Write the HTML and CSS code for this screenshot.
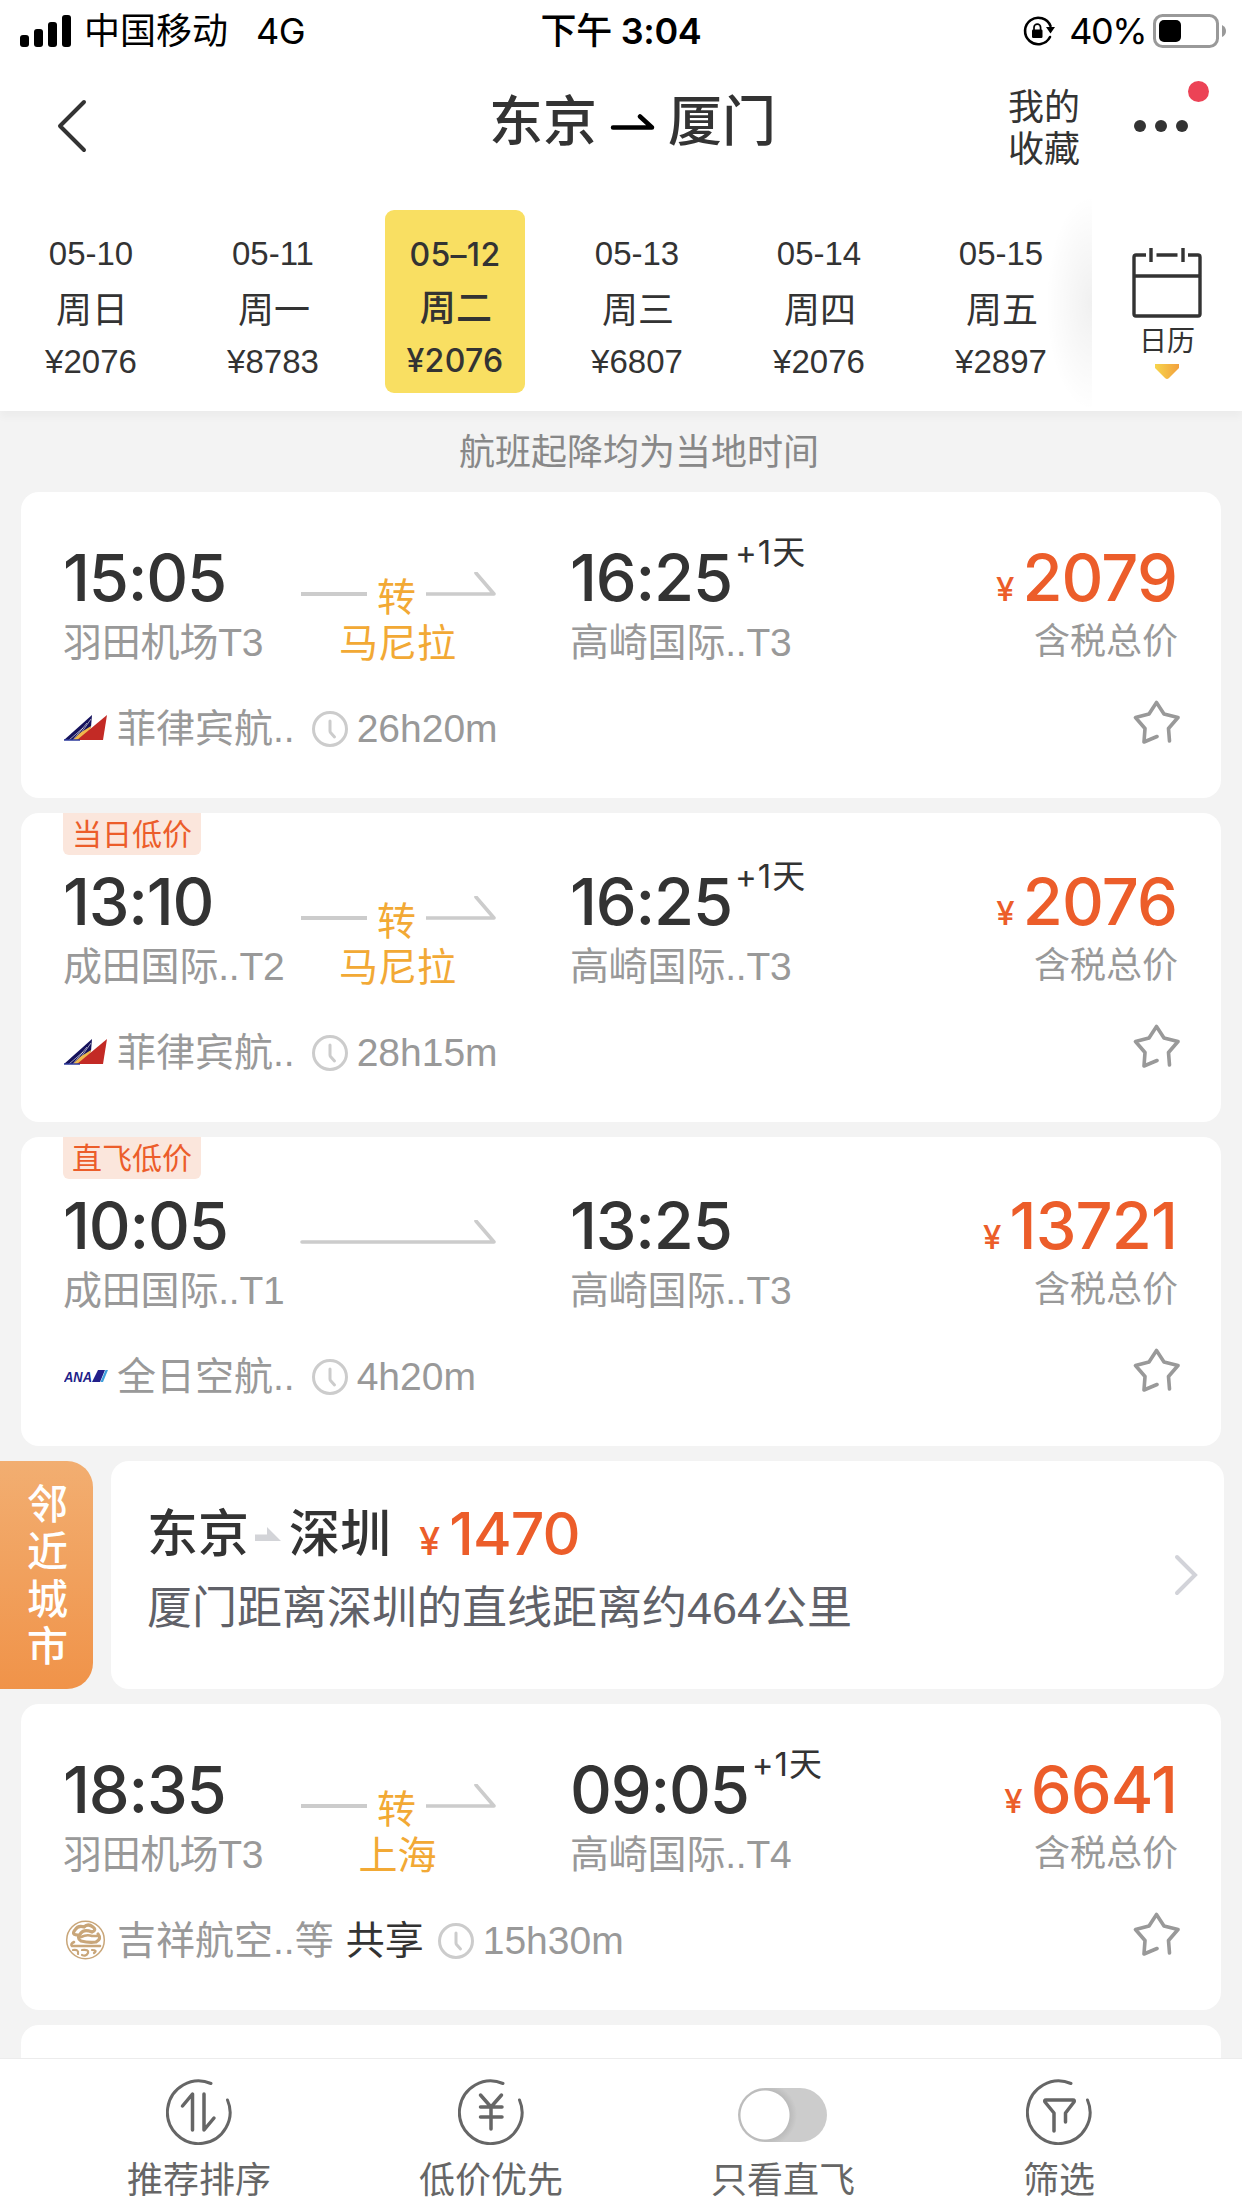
FILE: index.html
```
<!DOCTYPE html>
<html lang="zh-CN">
<head>
    <meta charset="UTF-8">
    <meta name="viewport" content="width=device-width, initial-scale=1.0">
    <title>东京 - 厦门 航班列表</title>
    <link rel="stylesheet" href="styles.css">
</head>
<body>
    <!-- shared icons -->
    <svg class="sprite">
        <symbol id="icon-line" viewBox="0 0 68 30">
            <path d="M2 22H68" fill="none" stroke="#ccc" stroke-width="4"/>
        </symbol>
        <symbol id="icon-half-arrow" viewBox="0 0 70 30">
            <path d="M0 22H68L50 1" fill="none" stroke="#ccc" stroke-width="3.6" stroke-linecap="round" stroke-linejoin="round"/>
        </symbol>
        <symbol id="icon-long-arrow" viewBox="0 0 197 30">
            <path d="M3 22H195L177 1" fill="none" stroke="#ccc" stroke-width="3.6" stroke-linecap="round" stroke-linejoin="round"/>
        </symbol>
        <symbol id="icon-clock" viewBox="0 0 36 36">
            <circle cx="18" cy="18" r="16.5" fill="none" stroke="#ccc" stroke-width="3"/>
            <path d="M18 10v10q0 1 .7 1.800L22.500 26" fill="none" stroke="#ccc" stroke-width="3" stroke-linecap="round"/>
        </symbol>
        <symbol id="icon-star" viewBox="0 0 48 46">
            <path d="M25 37.500L12 43L13 29.500L3.500 18.500L17 15L24.500 3.500L32 15L46 18.500L36.500 29.500L37.500 42" fill="none" stroke="#999" stroke-width="3.600" stroke-linecap="round" stroke-linejoin="round"/>
        </symbol>
        <symbol id="icon-ring" viewBox="0 0 66 66">
            <path d="M45 4.500A31.300 31.300 0 1 0 61.500 21" fill="none" stroke="#666" stroke-width="3" stroke-linecap="round"/>
        </symbol>
        <symbol id="logo-pal" viewBox="0 0 44 44">
            <path d="M0 34L28 9L27 21L13 34Z" fill="#15125c"/>
            <path d="M5 34L19 22M9 34L23 17M15 30L27 13" stroke="#fff" stroke-width=".6" fill="none"/>
            <path d="M9 34L16 27L27 20L26 25L15 34Z" fill="#f0b84c"/>
            <path d="M13 34L43 9L39 34Z" fill="#c32a25"/>
            <path d="M0 34H16" stroke="#2c3a9c" stroke-width="1.500"/>
        </symbol>
    </svg>

    <div class="status-bar">
        <div class="status-left">
            <svg class="signal" viewBox="0 0 52 32">
                <rect x="0" y="20" width="9" height="12" rx="3"/>
                <rect x="14" y="14" width="9" height="18" rx="3"/>
                <rect x="28" y="7" width="9" height="25" rx="3"/>
                <rect x="42" y="0" width="9" height="32" rx="3"/>
            </svg>
            <span>中国移动</span>
            <span class="network">4G</span>
        </div>
        <div class="status-time"><span>下午</span> 3:04</div>
        <div class="status-right">
            <svg class="lock" viewBox="0 0 34 32">
                <path d="M28 22A13.200 13.200 0 1 1 28.500 11" fill="none" stroke="#000" stroke-width="2.600" stroke-linecap="round"/>
                <path d="M24 12H33L28.500 18.500Z"/>
                <rect x="10" y="14.500" width="10.500" height="8.500" rx="1.200"/>
                <path d="M12 15V12.500a3.300 3.300 0 0 1 6.600 0V15" fill="none" stroke="#000" stroke-width="1.700"/>
            </svg>
            <span class="percent">40%</span>
            <svg class="battery" viewBox="0 0 74 34">
                <rect x="1.500" y="1.500" width="63" height="31" rx="8" fill="none" stroke="#999" stroke-width="3"/>
                <rect x="6" y="6" width="22" height="22" rx="5"/>
                <path d="M69 11q4 2 4 6t-4 6z" fill="#999"/>
            </svg>
        </div>
    </div>

    <div class="nav">
        <svg class="back" viewBox="0 0 32 56"><path d="M28 4L4 28L28 52" fill="none" stroke="#333" stroke-width="4" stroke-linecap="round" stroke-linejoin="round"/></svg>
        <div class="nav-title">
            <span>东京</span>
            <svg class="title-arrow" viewBox="0 0 46 20"><path d="M3 13.500H42L30 2.500" fill="none" stroke="#000" stroke-width="4.500" stroke-linecap="round" stroke-linejoin="round"/></svg>
            <span>厦门</span>
        </div>
        <div class="favorites">我的<br>收藏</div>
        <div class="more">
            <i></i><i></i><i></i>
            <span class="red-dot"></span>
        </div>
    </div>

    <div class="date-bar">
        <div class="dates">
            <div class="date"><span>05-10</span><b>周日</b><span>¥2076</span></div>
            <div class="date"><span>05-11</span><b>周一</b><span>¥8783</span></div>
            <div class="date active"><span>05–12</span><b>周二</b><span>¥2076</span></div>
            <div class="date"><span>05-13</span><b>周三</b><span>¥6807</span></div>
            <div class="date"><span>05-14</span><b>周四</b><span>¥2076</span></div>
            <div class="date"><span>05-15</span><b>周五</b><span>¥2897</span></div>
            <div class="fade"></div>
        </div>
        <div class="calendar">
            <svg class="calendar-icon" viewBox="0 0 70 70">
                <g fill="none" stroke="#333" stroke-width="3.400">
                    <path d="M14 7H4Q2 7 2 9V66Q2 68 4 68H66Q68 68 68 66V9Q68 7 66 7H56M24.500 7H45.500M2 28H68"/>
                    <path d="M19 0V14M51 0V14"/>
                </g>
            </svg>
            <span>日历</span>
            <svg class="calendar-more" viewBox="0 0 24 15">
                <defs><linearGradient id="gold"><stop stop-color="#f7d54d"/><stop offset="1" stop-color="#f2a03d"/></linearGradient></defs>
                <path d="M0 0H24V4L14 14Q12 16 10 14L0 4Z" fill="url(#gold)"/>
            </svg>
        </div>
    </div>

    <div class="list">
        <p class="notice">航班起降均为当地时间</p>

        <div class="card">
            <div class="flight-main">
                <div class="place depart">
                    <div class="time">15:05</div>
                    <div class="airport">羽田机场T3</div>
                </div>
                <div class="route">
                    <div class="route-line">
                        <svg class="line"><use href="#icon-line"/></svg>
                        <span>转</span>
                        <svg class="half-arrow"><use href="#icon-half-arrow"/></svg>
                    </div>
                    <div class="via">马尼拉</div>
                </div>
                <div class="place">
                    <div class="time">16:25<span class="plus">+1天</span></div>
                    <div class="airport">高崎国际..T3</div>
                </div>
                <div class="fare">
                    <div class="price"><small>¥</small>2079</div>
                    <div class="tax">含税总价</div>
                </div>
            </div>
            <div class="flight-info">
                <svg class="logo"><use href="#logo-pal"/></svg>
                <span class="airline">菲律宾航..</span>
                <svg class="clock"><use href="#icon-clock"/></svg>
                <span class="duration">26h20m</span>
                <svg class="star"><use href="#icon-star"/></svg>
            </div>
        </div>

        <div class="card tagged">
            <span class="tag">当日低价</span>
            <div class="flight-main">
                <div class="place depart">
                    <div class="time">13:10</div>
                    <div class="airport">成田国际..T2</div>
                </div>
                <div class="route">
                    <div class="route-line">
                        <svg class="line"><use href="#icon-line"/></svg>
                        <span>转</span>
                        <svg class="half-arrow"><use href="#icon-half-arrow"/></svg>
                    </div>
                    <div class="via">马尼拉</div>
                </div>
                <div class="place">
                    <div class="time">16:25<span class="plus">+1天</span></div>
                    <div class="airport">高崎国际..T3</div>
                </div>
                <div class="fare">
                    <div class="price"><small>¥</small>2076</div>
                    <div class="tax">含税总价</div>
                </div>
            </div>
            <div class="flight-info">
                <svg class="logo"><use href="#logo-pal"/></svg>
                <span class="airline">菲律宾航..</span>
                <svg class="clock"><use href="#icon-clock"/></svg>
                <span class="duration">28h15m</span>
                <svg class="star"><use href="#icon-star"/></svg>
            </div>
        </div>

        <div class="card tagged">
            <span class="tag">直飞低价</span>
            <div class="flight-main">
                <div class="place depart">
                    <div class="time">10:05</div>
                    <div class="airport">成田国际..T1</div>
                </div>
                <div class="route">
                    <div class="route-line">
                        <svg class="long-arrow"><use href="#icon-long-arrow"/></svg>
                    </div>
                </div>
                <div class="place">
                    <div class="time">13:25</div>
                    <div class="airport">高崎国际..T3</div>
                </div>
                <div class="fare">
                    <div class="price"><small>¥</small>13721</div>
                    <div class="tax">含税总价</div>
                </div>
            </div>
            <div class="flight-info">
                <svg class="logo" viewBox="0 0 44 44">
                    <text x="0" y="28" class="ana-text" textLength="28" lengthAdjust="spacingAndGlyphs">ANA</text>
                    <path d="M34 16H41L36 28H28Z" fill="#221f8a"/>
                    <path d="M41.500 16H44L39 28H36.500Z" fill="#3fa0dc"/>
                </svg>
                <span class="airline">全日空航..</span>
                <svg class="clock"><use href="#icon-clock"/></svg>
                <span class="duration">4h20m</span>
                <svg class="star"><use href="#icon-star"/></svg>
            </div>
        </div>

        <div class="nearby">
            <div class="nearby-label">邻近城市</div>
            <div class="nearby-card">
                <div>
                    <div class="nearby-route">
                        <span>东京</span>
                        <svg class="nearby-arrow" viewBox="0 0 26 14"><path d="M0 7.500H12V0L26 14H0Z" fill="#d3d4d8"/></svg>
                        <span>深圳</span>
                        <span class="nearby-price"><small>¥</small>1470</span>
                    </div>
                    <div class="nearby-text">厦门距离深圳的直线距离约464公里</div>
                </div>
                <svg class="chevron" viewBox="0 0 24 42"><path d="M3 3L21 21L3 39" fill="none" stroke="#d2d3d9" stroke-width="4" stroke-linecap="round"/></svg>
            </div>
        </div>

        <div class="card">
            <div class="flight-main">
                <div class="place depart">
                    <div class="time">18:35</div>
                    <div class="airport">羽田机场T3</div>
                </div>
                <div class="route">
                    <div class="route-line">
                        <svg class="line"><use href="#icon-line"/></svg>
                        <span>转</span>
                        <svg class="half-arrow"><use href="#icon-half-arrow"/></svg>
                    </div>
                    <div class="via">上海</div>
                </div>
                <div class="place">
                    <div class="time">09:05<span class="plus">+1天</span></div>
                    <div class="airport">高崎国际..T4</div>
                </div>
                <div class="fare">
                    <div class="price"><small>¥</small>6641</div>
                    <div class="tax">含税总价</div>
                </div>
            </div>
            <div class="flight-info">
                <svg class="logo" viewBox="0 0 44 44">
                    <g fill="none" stroke="#c9a679" stroke-linecap="round">
                        <circle cx="21.500" cy="22" r="18.800" stroke-width="1.500"/>
                        <path d="M14 17Q7 17 11 12Q14 7 20 9Q24 5 29 9Q33 12 28 14Q20 11 17 15Q12 20 17 23Q25 25 32 24Q38 21 34 16" stroke-width="3.200"/>
                        <path d="M17 19Q23 16 28 18H33M10 24Q6 26 8 28H36" stroke-width="2.600"/>
                        <path d="M9 32Q15 31 14 36M18 32Q25 31 24 35Q22 39 18 37M28 32Q34 32 30 35" stroke-width="2.200"/>
                    </g>
                </svg>
                <span class="airline">吉祥航空..等</span>
                <span class="shared">共享</span>
                <svg class="clock"><use href="#icon-clock"/></svg>
                <span class="duration">15h30m</span>
                <svg class="star"><use href="#icon-star"/></svg>
            </div>
        </div>

        <div class="card"></div>
    </div>

    <div class="toolbar">
        <div class="tool">
            <svg class="tool-icon" viewBox="0 0 66 66">
                <use href="#icon-ring"/>
                <path d="M16.500 33L26.500 21V57M38 21V57L48 45" transform="translate(0 -6)" fill="none" stroke="#666" stroke-width="3.500" stroke-linecap="round" stroke-linejoin="round"/>
            </svg>
            <span>推荐排序</span>
        </div>
        <div class="tool">
            <svg class="tool-icon" viewBox="0 0 66 66">
                <use href="#icon-ring"/>
                <path d="M22.500 16L33 28L43.500 16M22.500 28H44M22.500 38H44M33 28V50" fill="none" stroke="#666" stroke-width="3.500" stroke-linecap="round" stroke-linejoin="round"/>
            </svg>
            <span>低价优先</span>
        </div>
        <div class="tool">
            <div class="switch"></div>
            <span>只看直飞</span>
        </div>
        <div class="tool last">
            <svg class="tool-icon" viewBox="0 0 66 66">
                <use href="#icon-ring"/>
                <path d="M28 52V34L19 23Q18 21 20 21H47Q49 21 48 23L39.500 34V43" fill="none" stroke="#666" stroke-width="3.500" stroke-linecap="round" stroke-linejoin="round"/>
            </svg>
            <span>筛选</span>
        </div>
    </div>
</body>
</html>
```

FILE: styles.css
```
* {
    margin: 0;
    padding: 0;
    box-sizing: border-box;
}

body {
    width: 1242px;
    height: 2208px;
    display: flex;
    flex-direction: column;
    overflow: hidden;
    background: #f3f3f3;
    color: #333;
    font-family: Inter, "Noto Sans CJK SC", sans-serif;
}

svg {
    display: block;
    flex-shrink: 0;
}

.sprite {
    position: absolute;
    width: 0;
    height: 0;
}

/* status bar */
.status-bar {
    display: grid;
    grid-template-columns: 1fr auto 1fr;
    align-items: center;
    height: 62px;
    padding: 0 18px 0 20px;
    background: #fff;
    color: #000;
    font-size: 36px;
    line-height: 62px;
}

.status-left,
.status-right {
    display: flex;
    align-items: center;
}

.signal {
    width: 52px;
    height: 32px;
    margin-right: 12px;
}

.network {
    margin-left: 28px;
    letter-spacing: -0.6px;
}

.status-time {
    margin-left: -2px;
    font-weight: 600;
    letter-spacing: -0.3px;
}

.status-time span {
    font-weight: 500;
}

.status-right {
    justify-content: flex-end;
    margin-right: -3px;
}

.lock {
    width: 34px;
    height: 32px;
    margin-right: 13px;
}

.percent {
    letter-spacing: -1.5px;
    margin-right: 7px;
}

.battery {
    width: 74px;
    height: 34px;
}

/* navigation */
.nav {
    display: flex;
    align-items: center;
    height: 128px;
    padding: 0 54px 0 56px;
    background: #fff;
}

.back {
    width: 32px;
    height: 56px;
}

.nav-title {
    display: flex;
    align-items: center;
    margin-left: 401px;
    font-size: 54px;
    font-weight: 500;
    line-height: 80px;
    padding-bottom: 8px;
}

.title-arrow {
    width: 46px;
    height: 20px;
    margin: 4px 12px 0 13px;
}

.favorites {
    margin-left: auto;
    padding-top: 4px;
    font-size: 36px;
    line-height: 42px;
}

.more {
    position: relative;
    display: flex;
    gap: 9px;
    margin-left: 54px;
}

.more i {
    width: 12px;
    height: 12px;
    border-radius: 50%;
    background: #333;
}

.red-dot {
    position: absolute;
    top: -39px;
    right: -21px;
    width: 21px;
    height: 21px;
    border-radius: 50%;
    background: #ec4356;
}

/* date strip */
.date-bar {
    display: flex;
    height: 221px;
    background: #fff;
    box-shadow: 0 6px 8px rgba(0, 0, 0, 0.03);
    z-index: 1;
}

.dates {
    position: relative;
    display: flex;
    gap: 42px;
    width: 1092px;
    padding: 20px 0 18px 21px;
}

.date {
    flex: 0 0 140px;
    display: flex;
    flex-direction: column;
    align-items: center;
    padding-top: 22px;
    font-family: "Liberation Sans", "Noto Sans CJK SC", sans-serif;
    font-size: 33px;
    line-height: 44px;
    border-radius: 9px;
}

.date b {
    margin: 3px 0 -3px 2px;
    font-size: 36px;
    font-weight: 400;
    line-height: 64px;
}

.date.active {
    padding-top: 23px;
    background: #f9df62;
    font-family: Inter, "Noto Sans CJK SC", sans-serif;
    font-size: 32px;
    font-weight: 500;
    letter-spacing: 0.3px;
}

.date.active b {
    margin: 0 0 0 2px;
    font-weight: 500;
    line-height: 62px;
}

.fade {
    position: absolute;
    top: 5px;
    right: 0;
    bottom: 0;
    width: 46px;
    background: radial-gradient(ellipse 46px 108px at 100% 50%, rgba(0, 0, 0, 0.06), rgba(255, 255, 255, 0));
}

.calendar {
    flex: 1;
    display: flex;
    flex-direction: column;
    align-items: center;
    padding-top: 58px;
    font-size: 28px;
    line-height: 46px;
}

.calendar-icon {
    width: 70px;
    height: 70px;
}

.calendar-more {
    width: 24px;
    height: 15px;
}

/* flight list */
.list {
    flex: 1;
    overflow: hidden;
}

.notice {
    padding: 2px 0 0 36px;
    color: #888;
    font-size: 36px;
    line-height: 79px;
    text-align: center;
}

.card {
    position: relative;
    height: 306px;
    margin: 0 21px 15px;
    padding: 49px 44px 0 42px;
    border-radius: 18px;
    background: #fff;
}

.card.tagged {
    height: 309px;
    padding-top: 52px;
}

.tag {
    position: absolute;
    top: 0;
    left: 42px;
    width: 138px;
    height: 42px;
    border-radius: 0 0 6px 6px;
    background: #fbe6dc;
    color: #ec5d2a;
    font-size: 30px;
    line-height: 42px;
    text-align: center;
}

.flight-main {
    display: flex;
}

.depart {
    width: 236px;
}

.time {
    display: flex;
    font-size: 65px;
    font-weight: 500;
    line-height: 73px;
    letter-spacing: -1.2px;
}

.plus {
    margin: -5px 0 0 3px;
    font-size: 33px;
    font-weight: 400;
    line-height: 32px;
    letter-spacing: 1px;
}

.airport {
    margin-top: 2px;
    color: #999;
    font-family: "Liberation Sans", "Noto Sans CJK SC", sans-serif;
    font-size: 39px;
    line-height: 54px;
    letter-spacing: -0.2px;
    white-space: nowrap;
}

.route {
    width: 197px;
    margin-right: 74px;
    color: #f2a935;
    font-size: 39px;
    line-height: 54px;
    text-align: center;
}

.route-line {
    display: flex;
    justify-content: space-between;
    height: 46px;
    margin-top: 29px;
}

.line {
    width: 68px;
    height: 30px;
    margin-top: 2px;
}

.half-arrow {
    width: 70px;
    height: 30px;
    margin-top: 2px;
}

.long-arrow {
    width: 197px;
    height: 30px;
    margin-top: 2px;
}

.fare {
    margin-left: auto;
    text-align: right;
}

.price {
    height: 73px;
    color: #ec5d2a;
    font-size: 65px;
    font-weight: 500;
    line-height: 73px;
    letter-spacing: -0.9px;
}

.price small {
    margin-right: 9px;
    font-size: 33px;
    line-height: 0;
}

.tax {
    margin-right: -1px;
    color: #999;
    font-size: 36px;
    line-height: 54px;
}

.flight-info {
    display: flex;
    align-items: center;
    margin-top: 32px;
    color: #999;
    font-family: "Liberation Sans", "Noto Sans CJK SC", sans-serif;
    font-size: 39px;
    line-height: 54px;
}

.logo {
    width: 44px;
    height: 44px;
    margin: -3px 9px 0 1px;
}

.ana-text {
    fill: #221f8a;
    font: italic bold 15px "Liberation Sans", sans-serif;
}

.clock {
    width: 36px;
    height: 36px;
    margin: -1px 9px 0 17px;
}

.shared {
    margin: 0 -3px 0 12px;
    color: #333;
}

.star {
    width: 48px;
    height: 46px;
    margin: -14px -3px 0 auto;
}

/* nearby city */
.nearby {
    display: flex;
    height: 228px;
    margin-bottom: 15px;
    padding-right: 18px;
    gap: 18px;
}

.nearby-label {
    width: 93px;
    padding: 20px 25px 0 27px;
    border-radius: 0 26px 26px 0;
    background: linear-gradient(#f2ae71, #f09349);
    color: #fff;
    font-size: 41px;
    font-weight: 500;
    line-height: 47.4px;
    word-break: break-all;
}

.nearby-card {
    flex: 1;
    display: flex;
    justify-content: space-between;
    padding: 33px 26px 0 36px;
    border-radius: 18px;
    background: #fff;
}

.nearby-route {
    display: flex;
    align-items: center;
    height: 80px;
    font-size: 51px;
    font-weight: 500;
    line-height: 80px;
}

.nearby-arrow {
    width: 26px;
    height: 14px;
    margin: 0 8px 0 6px;
}

.nearby-price {
    margin-left: 28px;
    color: #ec5d2a;
    font-size: 59px;
    letter-spacing: -0.9px;
}

.nearby-price small {
    margin-right: 10px;
    font-size: 38px;
    line-height: 0;
}

.nearby-text {
    margin-top: 1px;
    color: #606168;
    font-family: "Liberation Sans", "Noto Sans CJK SC", sans-serif;
    font-size: 45px;
    line-height: 68px;
}

.chevron {
    width: 24px;
    height: 42px;
    margin-top: 60px;
}

/* bottom toolbar */
.toolbar {
    display: flex;
    gap: 148px;
    height: 150px;
    padding: 20px 0 0 127px;
    border-top: 1px solid #ececec;
    background: #fff;
    color: #666;
    font-size: 36px;
    line-height: 54px;
}

.tool {
    display: flex;
    flex-direction: column;
    align-items: center;
    width: 144px;
}

.tool.last {
    width: 112px;
}

.tool-icon {
    width: 66px;
    height: 66px;
    margin-bottom: 8px;
}

.switch {
    width: 89px;
    height: 54px;
    margin: 9px 1px 11px 0;
    border-radius: 27px;
    background: radial-gradient(circle at 27px 27px, #fff 24px, #bbb 25px, #ccc 32px);
}
```
